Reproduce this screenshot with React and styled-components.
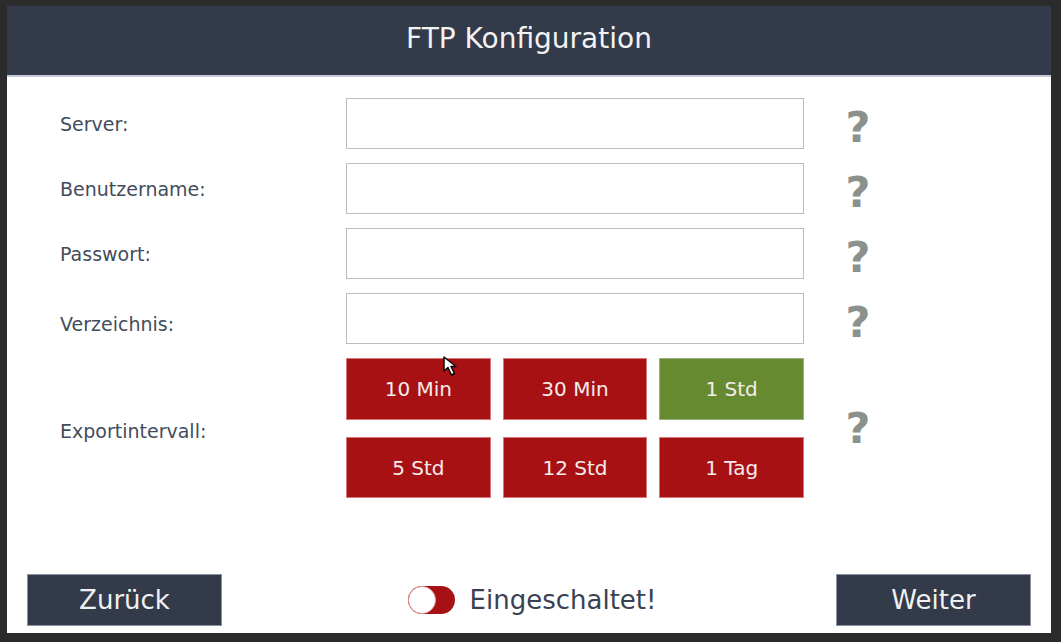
import React, { useState } from "react";
import styled, { createGlobalStyle } from "styled-components";

const GlobalStyle = createGlobalStyle`
  html, body {
    margin: 0;
    padding: 0;
    background: #2b2b2b;
  }
  * { box-sizing: border-box; }
`;

const Frame = styled.div`
  width: 1061px;
  height: 642px;
  padding: 6px 10px 9px 7px;
  background: #2b2b2b;
  font-family: "DejaVu Sans", "Liberation Sans", sans-serif;
`;

const Window = styled.div`
  position: relative;
  height: 100%;
  background: #ffffff;
  display: flex;
  flex-direction: column;
`;

const Header = styled.div`
  height: 71px;
  background: #333a4a;
  border-bottom: 2px solid #c8c8da;
  color: #f2f2f2;
  font-size: 28px;
  display: flex;
  align-items: center;
  justify-content: center;
  padding-bottom: 4px;
`;

const Form = styled.div`
  display: grid;
  grid-template-columns: 286px 458px 108px;
  row-gap: 14px;
  padding: 21px 0 0 53px;
  align-items: center;
`;

const Label = styled.div`
  font-size: 19px;
  color: #434c5c;
  padding-top: ${(p) => p.$shift || "0px"};
`;

const Input = styled.input`
  height: 51px;
  width: 100%;
  border: 1px solid #b9bebc;
  background: #fff;
  outline: none;
  font-size: 18px;
  padding: 0 10px;
`;

const Help = styled.div`
  font-size: 43px;
  font-weight: bold;
  color: #8b928d;
  text-align: center;
  line-height: 1;
  padding-top: ${(p) => (p.$shift ? "0" : "8px")};
`;

const IntervalGrid = styled.div`
  display: grid;
  grid-template-columns: repeat(3, 1fr);
  grid-template-rows: 62px 61px;
  column-gap: 12px;
  row-gap: 17px;
`;

const IntervalButton = styled.button`
  border: 1px solid ${(p) => (p.$active ? "#9ab27a" : "#d27a7a")};
  background: ${(p) => (p.$active ? "#668a30" : "#a81113")};
  color: #f4ecec;
  font-family: inherit;
  font-size: 20px;
  padding: 0;
  cursor: pointer;
`;

const Footer = styled.div`
  margin-top: auto;
  display: flex;
  align-items: center;
  justify-content: space-between;
  padding: 0 20px 7px 20px;
`;

const NavButton = styled.button`
  width: 195px;
  height: 52px;
  background: #333a4a;
  border: 1px solid #8a92a2;
  color: #f0f0f0;
  font-family: inherit;
  font-size: 26px;
  padding: 0;
  cursor: pointer;
`;

const ToggleRow = styled.div`
  display: flex;
  align-items: center;
  gap: 15px;
  margin-left: 6px;
`;

const Track = styled.div`
  position: relative;
  width: 47px;
  height: 28px;
  border-radius: 14px;
  background: #a81113;
`;

const Knob = styled.div`
  position: absolute;
  left: 0;
  top: 0;
  width: 28px;
  height: 28px;
  border-radius: 50%;
  background: #fff;
  border: 1px solid #e0a0a0;
`;

const ToggleText = styled.span`
  font-size: 26px;
  color: #3a4252;
`;

const Cursor = styled.svg`
  position: absolute;
  left: 436px;
  top: 350px;
  width: 20px;
  height: 22px;
`;

const fields = ["Server:", "Benutzername:", "Passwort:", "Verzeichnis:"];
const intervals = ["10 Min", "30 Min", "1 Std", "5 Std", "12 Std", "1 Tag"];

function App() {
  const [interval, setInterval] = useState("1 Std");

  return (
    <Frame>
      <GlobalStyle />
      <Window>
        <Header>FTP Konfiguration</Header>
        <Form>
          {fields.map((f) => (
            <React.Fragment key={f}>
              <Label $shift={f === "Verzeichnis:" ? "10px" : undefined}>{f}</Label>
              <Input type={f === "Passwort:" ? "password" : "text"} />
              <Help>?</Help>
            </React.Fragment>
          ))}
          <Label $shift="6px">Exportintervall:</Label>
          <IntervalGrid>
            {intervals.map((i) => (
              <IntervalButton
                key={i}
                $active={i === interval}
                onClick={() => setInterval(i)}
              >
                {i}
              </IntervalButton>
            ))}
          </IntervalGrid>
          <Help $shift>?</Help>
        </Form>
        <Footer>
          <NavButton>Zurück</NavButton>
          <ToggleRow>
            <Track>
              <Knob />
            </Track>
            <ToggleText>Eingeschaltet!</ToggleText>
          </ToggleRow>
          <NavButton>Weiter</NavButton>
        </Footer>
        <Cursor viewBox="0 0 20 22">
          <path
            d="M1 1 L1 15 L5 11.5 L8.5 19 L11.5 17.5 L8 10.5 L13 10.5 Z"
            fill="#fff"
            stroke="#000"
            strokeWidth="1.4"
            strokeLinejoin="round"
          />
        </Cursor>
      </Window>
    </Frame>
  );
}

export default App;
